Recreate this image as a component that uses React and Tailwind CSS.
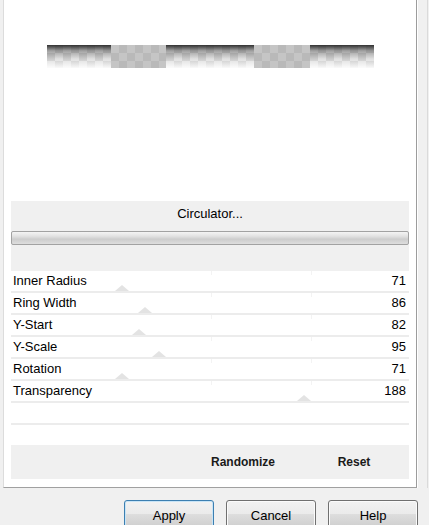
import React from 'react';

const params = [
  { label: 'Inner Radius', value: 71 },
  { label: 'Ring Width', value: 86 },
  { label: 'Y-Start', value: 82 },
  { label: 'Y-Scale', value: 95 },
  { label: 'Rotation', value: 71 },
  { label: 'Transparency', value: 188 },
];

// strip segments: fading checker vs flat gray checker
const segments = [
  { w: 'w-[64px]', fade: true },
  { w: 'w-[55px]', fade: false },
  { w: 'w-[88px]', fade: true },
  { w: 'w-[56px]', fade: false },
  { w: 'w-[64px]', fade: true },
];

function Segment({ w, fade }) {
  if (fade) {
    return (
      <div
        className={`${w} h-full [background-image:linear-gradient(to_bottom,rgba(40,40,40,0.95)_0%,rgba(110,110,110,0.55)_25%,rgba(230,230,230,0.2)_60%,rgba(255,255,255,0.9)_100%),repeating-conic-gradient(#c4c4c4_0_25%,#dedede_0_50%)] [background-size:100%_100%,16px_16px]`}
      />
    );
  }
  return (
    <div
      className={`${w} h-full [background-image:repeating-conic-gradient(#b9b9b9_0_25%,#c5c5c5_0_50%)] [background-size:16px_16px]`}
    />
  );
}

function ParamRow({ label, value }) {
  // slider range 0..255 across the row width
  const left = 0.5 + (value / 255) * 397;
  return (
    <div className="relative h-[22px] border-b-2 border-[#ececec] flex items-center justify-between pl-[2px] pr-[3px] text-[13px] text-black">
      <div className="absolute top-0 left-[200px] w-px h-[4px] bg-[#f3f3f3]" />
      <div className="absolute top-0 left-[300px] w-px h-[4px] bg-[#f3f3f3]" />
      <div
        className="absolute bottom-0 w-0 h-0 border-l-[7px] border-r-[7px] border-b-[6px] border-l-transparent border-r-transparent border-b-[#e3e3e3]"
        style={{ left: left - 7 }}
      />
      <span className="relative">{label}</span>
      <span className="relative">{value}</span>
    </div>
  );
}

function DialogButton({ children, primary }) {
  return (
    <button
      className={`w-[90px] h-[28px] shrink-0 rounded-[3px] border text-[13px] text-black pt-[3px] bg-[linear-gradient(to_bottom,#f2f2f2_0%,#ebebeb_48%,#dddddd_52%,#cfcfcf_100%)] ${
        primary ? 'border-[#3c7fb1] shadow-[inset_0_0_0_1px_#c8e4f6]' : 'border-[#707070] shadow-[inset_0_0_0_1px_#fbfbfb]'
      }`}
    >
      {children}
    </button>
  );
}

export default function App() {
  return (
    <div className="w-[429px] h-[525px] overflow-hidden bg-[#f0f0f0] flex flex-col font-['Liberation_Sans',Arial,sans-serif]">
      <div className="flex h-[488px] shrink-0">
        <div className="w-[3px] shrink-0" />
        <div className="w-[414px] shrink-0 bg-white border-l border-l-[#dcdcdc] border-r border-r-[#9c9c9c] border-b border-b-[#a0a0a0] flex flex-col pl-[7px] pr-[7px]">
          {/* preview */}
          <div className="h-[201px] shrink-0 -ml-[7px] -mr-[7px] pt-[45px] pl-[43px]">
            <div className="flex h-[23px] blur-[0.6px]">
              {segments.map((s, i) => (
                <Segment key={i} {...s} />
              ))}
            </div>
          </div>

          {/* title + progress */}
          <div className="h-[70px] shrink-0 bg-[#f0f0f0] flex flex-col">
            <div className="h-[26px] leading-[26px] text-center text-[13px] text-black">Circulator...</div>
            <div className="mt-[4px] h-[14px] rounded-[2px] border border-[#a2a2a2] bg-[linear-gradient(to_bottom,#f4f4f4_0%,#e2e2e2_35%,#cdcdcd_60%,#dedede_100%)]" />
          </div>

          {/* parameters */}
          <div className="flex flex-col">
            {params.map((p) => (
              <ParamRow key={p.label} {...p} />
            ))}
            <div className="h-[22px] border-b-2 border-[#ececec]" />
          </div>

          <div className="h-[20px] shrink-0" />
          <div className="h-[34px] shrink-0 bg-[#f0f0f0] flex items-center justify-end pr-[10px] gap-[21px] text-[12px] font-bold text-[#1a1a1a]">
            <span className="w-[90px] text-center">Randomize</span>
            <span className="w-[90px] text-center">Reset</span>
          </div>
        </div>
        <div className="w-[12px] shrink-0 border-l border-l-white flex justify-end">
          <div className="w-[2px] h-full border-l border-l-[#dadada]" />
        </div>
      </div>

      {/* dialog buttons */}
      <div className="flex justify-end gap-[12px] pt-[12px] pr-[11px]">
        <DialogButton primary>Apply</DialogButton>
        <DialogButton>Cancel</DialogButton>
        <DialogButton>Help</DialogButton>
      </div>
    </div>
  );
}
